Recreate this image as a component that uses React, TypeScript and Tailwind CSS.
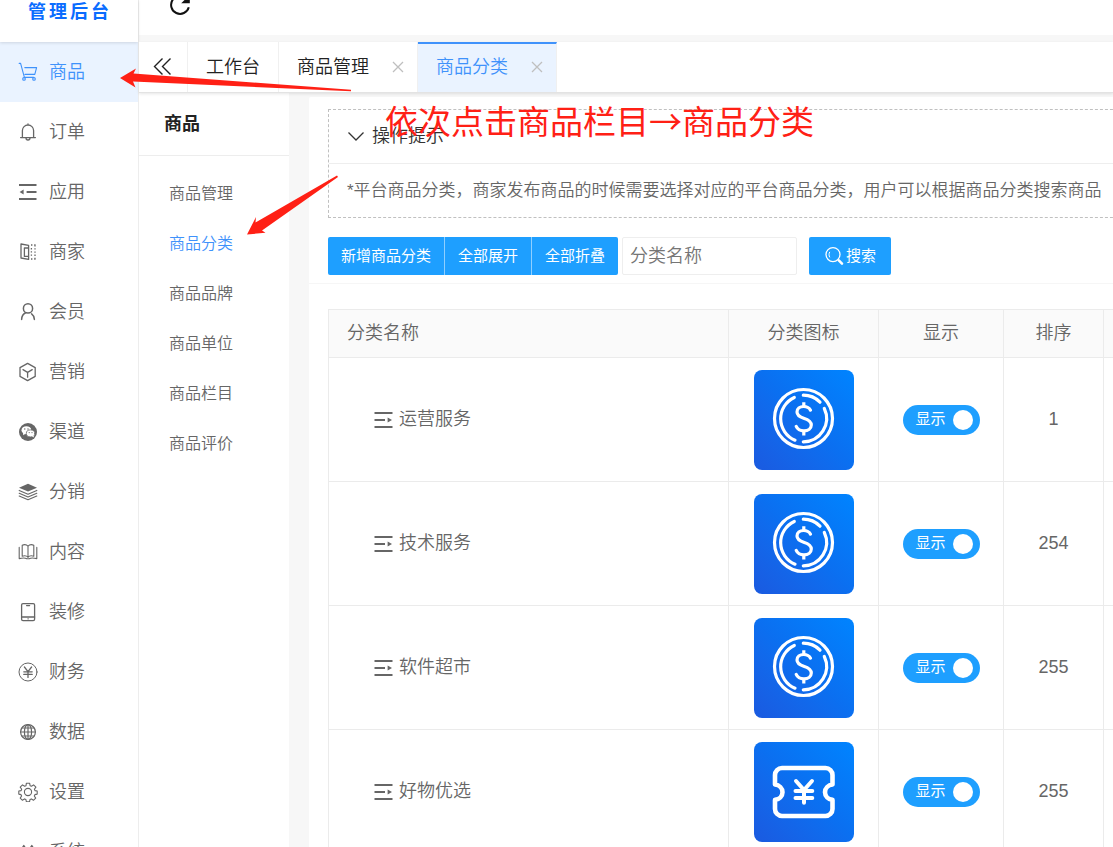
import type { ReactNode } from 'react';

function Icon({ children, size = 'h-5 w-5', stroke = '1.2' }: { children: ReactNode; size?: string; stroke?: string }) {
  return (
    <svg
      className={`shrink-0 ${size}`}
      viewBox="0 0 20 20"
      fill="none"
      stroke="currentColor"
      strokeWidth={stroke}
      strokeLinecap="round"
      strokeLinejoin="round"
      aria-hidden="true"
    >
      {children}
    </svg>
  );
}

const icons = {
  cart: (
    <Icon stroke="1.1">
      <path d="M1.200 1.400h1.400L6.400 15.400h9.200M6.800 5.600h11.800l-1.800 6.800H7" />
      <circle cx="6" cy="16.900" r="1.300" />
      <circle cx="16" cy="16.900" r="1.300" />
    </Icon>
  ),
  bell: (
    <Icon stroke="1.3">
      <path d="M2.600 15.600h14.800M4.400 15.400V8.600a5.600 5.600 0 0 1 11.200 0v6.800M8 16a2 2 0 0 0 4 0M10 1.800v1" />
    </Icon>
  ),
  menu: (
    <Icon stroke="2">
      <path d="M1 3h17.500M8.600 10h9.900M1 17h17.500" strokeLinecap="butt" />
      <path d="M1.600 10l4-2.400v4.800z" fill="currentColor" stroke="none" />
    </Icon>
  ),
  shop: (
    <Icon stroke="1.3">
      <path d="M3 2l7.600 1.400v14L3 16zM10.600 6H6.400v8.400h4.200" />
      <path d="M13 3h4.600M17 3v14M13 17h4.600M13.400 6v9" strokeDasharray="1.400 1.800" strokeLinecap="butt" />
    </Icon>
  ),
  user: (
    <Icon stroke="1.5">
      <circle cx="10" cy="6.400" r="4.600" />
      <path d="M7.600 10.800c-2.600 1.200-3.800 3.200-4 6.600M13.600 11.800c1.800 1.200 2.600 3 2.800 5.600" />
    </Icon>
  ),
  cube: (
    <Icon stroke="1.3">
      <path d="M9.600 1.400l7.600 4.200v8.800l-7.600 4.200L2 14.400V5.600zM5 7.600l4.600 2.800 4.600-2.800M9.600 10.400v4.800" />
    </Icon>
  ),
  wechat: (
    <Icon>
      <circle cx="10" cy="10" r="9" fill="currentColor" stroke="none" />
      <path d="M5 10l.2 3.200 2.600-1.600z" fill="#fff" stroke="none" />
      <ellipse cx="8.400" cy="8.200" rx="4.900" ry="4" fill="#fff" stroke="none" />
      <ellipse cx="12.600" cy="11.400" rx="4.300" ry="3.500" fill="#fff" stroke="currentColor" strokeWidth=".8" />
      <path d="M13.800 14l2 1.600-.2-2.400z" fill="#fff" stroke="none" />
      <g fill="currentColor" stroke="none">
        <circle cx="6.800" cy="7" r=".7" />
        <circle cx="10" cy="7" r=".7" />
        <circle cx="11.200" cy="10.600" r=".6" />
        <circle cx="14" cy="10.600" r=".6" />
      </g>
    </Icon>
  ),
  layers: (
    <Icon stroke="1.1">
      <path d="M10 1.800l9 4L10 9.600 1 5.800z" fill="currentColor" stroke="none" />
      <path d="M1.200 8.400l8.800 3.800 8.800-3.800M1.200 11.200l8.800 3.800 8.800-3.800M1.200 14l8.800 3.800 8.800-3.800" />
    </Icon>
  ),
  book: (
    <Icon stroke="1.1">
      <path d="M10 4.200v11.200M10 4.200C8.600 2.600 6.200 2.400 4.200 3.200v11c2.200-.8 4.600-.4 5.800 1 1.200-1.400 3.600-1.800 5.800-1v-11C13.800 2.400 11.400 2.600 10 4.200" />
      <path d="M1.200 5.400v11.200c3-.8 6.200-.8 7.600.2h2.400c1.400-1 4.600-1 7.600-.2V5.400" />
    </Icon>
  ),
  phone: (
    <Icon stroke="1.3">
      <rect x="3.600" y="1.600" width="13" height="17" rx="1.400" />
      <path d="M3.600 15h13M8.600 3.600h3M10 16.800h.2" />
    </Icon>
  ),
  yen: (
    <Icon stroke="1">
      <circle cx="10" cy="10" r="9" />
      <path d="M6.400 5l3.600 4.600L13.600 5M10 9.600v5.800M5.800 9.800h8.400M5.800 12.400h8.400" strokeWidth="1.3" />
    </Icon>
  ),
  globe: (
    <Icon stroke="1.2">
      <circle cx="10" cy="10" r="7.400" />
      <ellipse cx="10" cy="10" rx="3.600" ry="7.400" />
      <path d="M2.600 10h14.800M3.800 6h12.400M3.800 14h12.400M10 2.600v14.800" />
    </Icon>
  ),
  gear: (
    <Icon stroke="1.1">
      <circle cx="10" cy="10" r="3.600" />
      <path d="M8.400 1.200h3.200l.5 2.500 1.400.6 2.100-1.400 2.300 2.200-1.500 2.100.6 1.400 2.200.4v3.100l-2.300.5-.6 1.400 1.400 2.100-2.300 2.200-2-1.400-1.400.6-.5 2.300H8.400l-.5-2.300-1.400-.6-2 1.400-2.300-2.200 1.400-2.100L3 12.600.8 12.100V9l2.300-.4.6-1.400-1.500-2.100 2.300-2.200 2.100 1.400 1.400-.6z" />
    </Icon>
  ),
  system: (
    <Icon stroke="1.4">
      <path d="M3 8l2.800-4.400L8.600 8M11 8l2.800-4.400L16.600 8M2.600 8.600h14.800v8H2.600z" />
    </Icon>
  ),
};

const mainMenu: { label: string; icon: ReactNode }[] = [
  { label: '商品', icon: icons.cart },
  { label: '订单', icon: icons.bell },
  { label: '应用', icon: icons.menu },
  { label: '商家', icon: icons.shop },
  { label: '会员', icon: icons.user },
  { label: '营销', icon: icons.cube },
  { label: '渠道', icon: icons.wechat },
  { label: '分销', icon: icons.layers },
  { label: '内容', icon: icons.book },
  { label: '装修', icon: icons.phone },
  { label: '财务', icon: icons.yen },
  { label: '数据', icon: icons.globe },
  { label: '设置', icon: icons.gear },
  { label: '系统', icon: icons.system },
];

const subMenu = ['商品管理', '商品分类', '商品品牌', '商品单位', '商品栏目', '商品评价'];

const rows = [
  { name: '运营服务', art: 'coin', sort: 1 },
  { name: '技术服务', art: 'coin', sort: 254 },
  { name: '软件超市', art: 'coin', sort: 255 },
  { name: '好物优选', art: 'ticket', sort: 255 },
];

function CategoryArt({ kind }: { kind: string }) {
  return (
    <div className="mx-auto h-[100px] w-[100px] overflow-hidden rounded-lg bg-linear-to-tr from-[#1a5ae0] via-[#0b6ff0] to-[#0084ff]">
      <svg viewBox="0 0 100 100" className="h-full w-full" fill="none" stroke="#fff" strokeLinecap="round" strokeLinejoin="round" aria-hidden="true">
        {kind === 'coin' ? (
          <>
            <circle cx="49.500" cy="48.500" r="29" strokeWidth="3.200" />
            <path d="M40.300 27.500A23.300 23.300 0 0 0 41 70.200M49.300 25.200A23.300 23.300 0 0 1 66 32.200M70.300 38.500A23.300 23.300 0 0 1 49.300 71.800" strokeWidth="3.200" />
            <path d="M56.500 40.200c-1.300-2.500-3.800-3.700-6.800-3.700-4 0-6.700 2.300-6.700 5.500 0 3.400 2.400 4.800 6.700 6.200 4.800 1.500 7.600 3.200 7.600 6.900 0 3.500-3.100 5.800-7.400 5.800-3.600 0-6.400-1.600-7.700-4.500" strokeWidth="3.200" />
            <path d="M49.800 32.200v4.200M49.800 61.200v4.400" strokeWidth="3.200" strokeLinecap="butt" />
          </>
        ) : (
          <>
            <path d="M28 26h43.500a7 7 0 0 1 7 7v9.500c-4.200.5-7.500 3.700-7.500 7.700s3.300 7.200 7.500 7.700V67a7 7 0 0 1-7 7H28a7 7 0 0 1-7-7v-9.100c4.200-.5 7.500-3.700 7.500-7.700s-3.300-7.200-7.500-7.700V33a7 7 0 0 1 7-7z" strokeWidth="4.600" />
            <path d="M42 39l8 9 8-9M50 48v12.800M41.500 49h16.800M41.500 56h16.800" strokeWidth="4" />
          </>
        )}
      </svg>
    </div>
  );
}

function Sidebar() {
  return (
    <aside className="w-[139px] shrink-0 border-r border-[#ededed] bg-white">
      <div className="relative h-[42px] pl-7 text-[18px] leading-[24px] font-bold tracking-[3px] text-[#0a6cff] shadow-[0_1px_3px_rgba(0,0,0,0.12)]">
        管理后台
      </div>
      <nav>
        {mainMenu.map((item, i) => (
          <a
            key={item.label}
            href="#"
            className={`flex h-[60px] items-center gap-[11px] pl-[18px] text-[18px] ${i === 0 ? 'bg-[#eaf3ff] text-[#3f92fb]' : 'text-[#666]'}`}
          >
            {item.icon}
            <span>{item.label}</span>
          </a>
        ))}
      </nav>
    </aside>
  );
}

function CloseIcon() {
  return (
    <svg viewBox="0 0 12 12" className="h-3 w-3" stroke="#bfbfbf" strokeWidth="1.300" aria-hidden="true">
      <path d="M1 1l10 10M11 1L1 11" />
    </svg>
  );
}

function Tab({ label, active = false }: { label: string; active?: boolean }) {
  return (
    <div
      className={`flex items-center gap-[23px] border-r border-[#f0f0f0] pr-[13px] pl-[18px] ${active ? 'border-t-2 border-t-[#3f92fb] bg-[#eaf3ff] pb-[2px] text-[#3f92fb]' : 'text-[#222]'}`}
    >
      <a href="#">{label}</a>
      <button type="button" aria-label={`关闭${label}`}>
        <CloseIcon />
      </button>
    </div>
  );
}

function SubMenu() {
  return (
    <aside className="w-[150px] shrink-0 bg-white">
      <h2 className="flex h-[63px] items-center border-b border-[#ededed] pl-[25px] text-[18px] font-bold text-[#222]">商品</h2>
      <nav className="pt-[13px]">
        {subMenu.map((label) => (
          <a
            key={label}
            href="#"
            className={`flex h-[50px] items-center pl-[30px] text-[16px] ${label === '商品分类' ? 'text-[#3f92fb]' : 'text-[#666]'}`}
          >
            {label}
          </a>
        ))}
      </nav>
    </aside>
  );
}

function Toolbar() {
  return (
    <div className="flex items-center pt-[19px] pr-5 pl-[19px] text-[15px] text-white">
      <div className="flex h-[38px] divide-x divide-[#8fcfff] overflow-hidden rounded-xs bg-[#1e9fff] font-normal">
        <button type="button" className="w-[117px] whitespace-nowrap">新增商品分类</button>
        <button type="button" className="w-[87px] whitespace-nowrap">全部展开</button>
        <button type="button" className="w-[86px] whitespace-nowrap">全部折叠</button>
      </div>
      <input
        type="text"
        aria-label="分类名称"
        placeholder="分类名称"
        className="ml-1 h-[38px] w-[175px] rounded-xs border border-[#eee] px-[7px] text-[18px] text-[#333] outline-none placeholder:text-[#757575]"
      />
      <button type="button" className="ml-3 flex h-[38px] w-[82px] items-center justify-center gap-[2px] rounded-xs bg-[#1e9fff] font-normal whitespace-nowrap">
        <Icon stroke="1.300">
          <circle cx="9" cy="8.600" r="7" />
          <path d="M5.600 6.200c-.8 1.500-.8 3.300 0 4.800" strokeWidth="1" />
          <path d="M14.800 14.400l3.200 3.200" strokeWidth="2.600" />
        </Icon>
        搜索
      </button>
    </div>
  );
}

function CategoryTable() {
  return (
    <table className="w-full min-w-[1000px] table-fixed border-collapse border border-[#e6e6e6] text-[18px] text-[#666]">
      <colgroup>
        <col className="w-[400px]" />
        <col className="w-[150px]" />
        <col className="w-[125px]" />
        <col className="w-[100px]" />
        <col />
      </colgroup>
      <thead>
        <tr className="h-[48px] bg-[#fafafa]">
          <th className="border border-[#ebebeb] pl-[18px] text-left font-[350]">分类名称</th>
          <th className="border border-[#ebebeb] font-[350]">分类图标</th>
          <th className="border border-[#ebebeb] font-[350]">显示</th>
          <th className="border border-[#ebebeb] font-[350]">排序</th>
          <th className="border border-[#ebebeb]" />
        </tr>
      </thead>
      <tbody>
        {rows.map((row) => (
          <tr key={row.name} className="h-[124px]">
            <td className="border border-[#ebebeb] pl-[45px]">
              <div className="flex items-center gap-[5px]">
                <Icon stroke="2">
                  <path d="M.5 3h18M.5 10h10.500M.5 17h18" strokeLinecap="butt" />
                  <path d="M18 10l-4.400-2.600v5.200z" fill="currentColor" stroke="none" />
                </Icon>
                {row.name}
              </div>
            </td>
            <td className="border border-[#ebebeb]">
              <CategoryArt kind={row.art} />
            </td>
            <td className="border border-[#ebebeb]">
              <label className="mx-auto flex h-[30px] w-[77px] cursor-pointer items-center justify-between rounded-full bg-[#1e9fff] pr-[7px] pl-[13px] text-[15px] font-normal text-white">
                <input type="checkbox" defaultChecked className="sr-only" />
                <span>显示</span>
                <span className="h-5 w-5 rounded-full bg-white" />
              </label>
            </td>
            <td className="border border-[#ebebeb] text-center">{row.sort}</td>
            <td className="border border-[#ebebeb]" />
          </tr>
        ))}
      </tbody>
    </table>
  );
}

function Annotations() {
  return (
    <div className="pointer-events-none absolute inset-0 text-[#ff2015]">
      <svg className="absolute top-0 left-0 h-[240px] w-[360px]" viewBox="0 0 360 240" fill="currentColor" aria-hidden="true">
        <path d="M120 78L136 68.500L133.500 73.500L351 89.800V91.200L133 81.500L135.500 87.500Z" />
        <path d="M247 234.500L256 217L255.500 222.500L337 175.500L338 177L262 230.500L265.500 232.800Z" />
      </svg>
      <p className="absolute top-24 left-[385px] font-['Noto_Sans_CJK_SC',sans-serif] text-[33px] leading-[48px] font-normal whitespace-nowrap">依次点击商品栏目→商品分类</p>
    </div>
  );
}

export default function App() {
  return (
    <div className="relative flex h-screen overflow-hidden bg-[#f7f7f7] font-['Liberation_Sans','Noto_Sans_CJK_SC',sans-serif] font-[350]">
      <Sidebar />
      <div className="flex min-w-0 flex-1 flex-col">
        <header className="h-[35px] shrink-0 overflow-hidden bg-white pl-[29px]">
          <button type="button" aria-label="刷新" className="-mt-[7px] block">
            <svg viewBox="0 0 24 24" className="h-6 w-6" fill="none" stroke="#111" strokeWidth="2" aria-hidden="true">
              <path d="M18.500 5.500A9 9 0 1 0 20.800 14.200" />
              <path d="M21.800 2v8.200h-8.600z" fill="#111" stroke="none" />
            </svg>
          </button>
        </header>
        <div className="relative mt-[7px] flex h-[51px] shrink-0 border-b border-[#e3e3e3] bg-white text-[18px] shadow-[0_1px_3px_rgba(0,0,0,0.1)]">
          <button type="button" aria-label="收起菜单" className="flex w-[49px] items-center justify-center border-r border-[#f0f0f0]">
            <svg viewBox="0 0 20 20" className="h-5 w-5" fill="none" stroke="#222" strokeWidth="1.400" aria-hidden="true">
              <path d="M9.500 1.500L1.500 9.500l8 8M17.500 1.500l-8 8 8 8" />
            </svg>
          </button>
          <a href="#" className="flex items-center border-r border-[#f0f0f0] px-[18px] text-[#222]">工作台</a>
          <Tab label="商品管理" />
          <Tab label="商品分类" active />
        </div>
        <div className="flex min-h-0 flex-1">
          <SubMenu />
          <main className="mt-1 ml-5 min-w-0 flex-1 overflow-hidden rounded-tl-xs bg-white">
            <section className="border-b border-[#f6f6f6] pt-3 pb-2">
              <div className="-mr-5 ml-[19px] border border-dashed border-[#c0c0c0]">
                <h3 className="flex h-[54px] items-center gap-[7px] border-b border-[#eee] pl-[18px] text-[18px] font-[350] text-[#333]">
                  <svg viewBox="0 0 18 18" className="h-[18px] w-[18px]" fill="none" stroke="currentColor" strokeWidth="1.300" aria-hidden="true">
                    <path d="M1.500 4.500L9 12 16.500 4.500" />
                  </svg>
                  操作提示
                </h3>
                <p className="flex h-[53px] items-center pl-[18px] text-[17px] whitespace-nowrap text-[#666]">
                  *平台商品分类，商家发布商品的时候需要选择对应的平台商品分类，用户可以根据商品分类搜索商品
                </p>
              </div>
              <Toolbar />
            </section>
            <section className="pt-[25px] pl-[19px]">
              <CategoryTable />
            </section>
          </main>
        </div>
      </div>
      <Annotations />
    </div>
  );
}
